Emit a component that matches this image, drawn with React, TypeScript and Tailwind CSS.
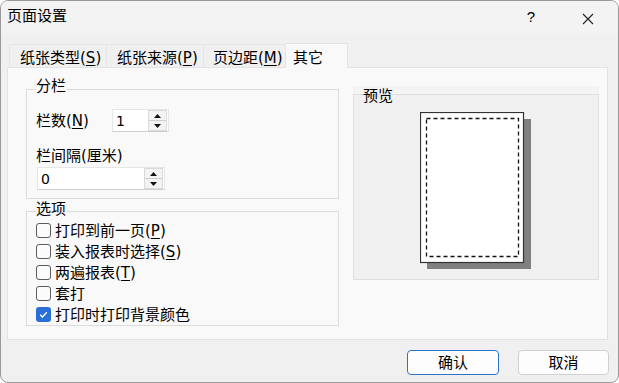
import React from "react";

function Mn({ c }: { c: string }) {
  return <span className="underline underline-offset-[2px]">{c}</span>;
}

function Spin() {
  return (
    <div className="flex flex-col w-[19px] h-[21px] border border-[#dadada] bg-[#f3f3f3]">
      <div className="flex-1 flex items-center justify-center border-b border-[#cfcfcf]">
        <svg width="7" height="4" viewBox="0 0 7 4">
          <path d="M0 4 L3.5 0 L7 4Z" fill="#111" />
        </svg>
      </div>
      <div className="flex-1 flex items-center justify-center">
        <svg width="7" height="4" viewBox="0 0 7 4">
          <path d="M0 0 L3.5 4 L7 0Z" fill="#111" />
        </svg>
      </div>
    </div>
  );
}

function Check({ checked, children }: { checked?: boolean; children: React.ReactNode }) {
  return (
    <div className="flex items-center h-[21px]">
      {checked ? (
        <div className="w-[15px] h-[15px] rounded-[3px] bg-[#2a6fd6] flex items-center justify-center">
          <svg width="11" height="11" viewBox="0 0 11 11">
            <path d="M2.2 5.8 L4.4 8 L8.8 3.3" fill="none" stroke="#fff" strokeWidth="1.3" />
          </svg>
        </div>
      ) : (
        <div className="w-[15px] h-[15px] rounded-[3px] border border-[#5c5c5c] bg-[#fbfbfb]" />
      )}
      <span className="ml-[4px] leading-[18px]">{children}</span>
    </div>
  );
}

export default function App() {
  return (
    <div className="w-[619px] h-[383px] bg-white">
      <div className="w-[619px] h-[383px] rounded-[8px] border border-[#9a9a9a] bg-[#f0f0f0] overflow-hidden text-[15px] text-black font-['DejaVu_Sans','Noto_Sans_CJK_SC',sans-serif] flex flex-col">
        {/* title bar */}
        <div className="h-[32px] bg-[#f3f3f3] flex items-start shrink-0">
          <div className="pl-[6px] pt-[6px] leading-[18px]">页面设置</div>
          <div className="flex-1" />
          <div className="pt-[7px] leading-[18px] text-[15px] mr-[47px] font-['Liberation_Sans',sans-serif]">?</div>
          <div className="pt-[12px] mr-[24px]">
            <svg width="12" height="12" viewBox="0 0 12 12">
              <path d="M1 1 L11 11 M11 1 L1 11" stroke="#222" strokeWidth="1.1" />
            </svg>
          </div>
        </div>

        {/* tabs */}
        <div className="ml-[8px] mt-[10px] flex items-end h-[24px] shrink-0">
          <div className="w-[97px] h-[23px] border-t border-l border-[#e6e6e6] bg-[#f0f0f0] pl-[10px] pt-[4px] leading-[18px]">
            纸张类型(<Mn c="S" />)
          </div>
          <div className="w-[97px] h-[23px] border-t border-l border-[#e6e6e6] bg-[#f0f0f0] pl-[10px] pt-[4px] leading-[18px]">
            纸张来源(<Mn c="P" />)
          </div>
          <div className="w-[82px] h-[23px] border-t border-l border-[#e6e6e6] bg-[#f0f0f0] pl-[9px] pt-[4px] leading-[18px]">
            页边距(<Mn c="M" />)
          </div>
          <div className="relative z-10 -mb-px w-[63px] h-[25px] border-t border-l border-r border-[#e3e3e3] bg-[#f9f9f9] pl-[7px] pt-[5px] leading-[18px]">
            其它
          </div>
        </div>

        {/* panel */}
        <div className="ml-[6px] w-[601px] h-[273px] border border-[#e3e3e3] bg-[#f9f9f9] flex shrink-0">
          {/* left column */}
          <div className="pl-[18px] w-[331px] flex flex-col">
            {/* 分栏 */}
            <div className="mt-[21px] h-[110px] border border-[#dcdcdc] flex flex-col">
              <div className="-mt-[12px] ml-[9px] w-fit h-[16px] leading-[16px] bg-[#f9f9f9] pr-[1px]">分栏</div>
              <div className="mt-[15px] pl-[9px] flex items-center h-[23px]">
                <div className="w-[76px] leading-[18px]">
                  栏数(<Mn c="N" />)
                </div>
                <div className="w-[57px] h-[23px] bg-white border border-[#e6e6e6] border-b-[#cfcfcf] flex items-center justify-between pl-[3px] pr-[1px]">
                  <span className="leading-[18px] text-[14px]">1</span>
                  <Spin />
                </div>
              </div>
              <div className="mt-[16px] pl-[9px] h-[16px] leading-[16px]">栏间隔(厘米)</div>
              <div className="mt-[3px] pl-[10px]">
                <div className="w-[128px] h-[23px] bg-white border border-[#e6e6e6] border-b-[#cfcfcf] flex items-center justify-between pl-[3px] pr-[1px]">
                  <span className="leading-[18px] text-[14px]">0</span>
                  <Spin />
                </div>
              </div>
            </div>

            {/* 选项 */}
            <div className="mt-[12px] h-[115px] border border-[#dcdcdc] flex flex-col">
              <div className="-mt-[11px] ml-[9px] w-fit h-[16px] leading-[16px] bg-[#f9f9f9] pr-[1px]">选项</div>
              <div className="mt-[3px] pl-[9px] flex flex-col">
                <Check>
                  打印到前一页(<Mn c="P" />)
                </Check>
                <Check>
                  装入报表时选择(<Mn c="S" />)
                </Check>
                <Check>
                  两遍报表(<Mn c="T" />)
                </Check>
                <Check>套打</Check>
                <Check checked>打印时打印背景颜色</Check>
              </div>
            </div>
          </div>

          {/* preview */}
          <div className="ml-[14px] w-[246px] mt-[18px] flex flex-col">
            <div className="h-[8px] bg-[#f4f4f4]" />
            <div className="h-[186px] border border-[#dedede] bg-[#f0f0f0] flex flex-col">
              <div className="-mt-[7px] ml-[9px] h-[16px] leading-[16px] w-fit">预览</div>
              <div className="mt-[8px] ml-[66px]">
                <svg width="114" height="160" viewBox="0 0 114 160">
                  <rect x="7" y="7" width="104" height="150" fill="#808080" />
                  <rect x="0.5" y="0.5" width="103" height="150" fill="#fff" stroke="#333" strokeWidth="1.2" />
                  <rect x="6.5" y="6.5" width="92" height="138" fill="none" stroke="#111" strokeWidth="1.3" strokeDasharray="4 3" />
                </svg>
              </div>
            </div>
          </div>
        </div>

        {/* buttons */}
        <div className="mt-[10px] flex justify-end pr-[9px] gap-[19px]">
          <div className="w-[92px] h-[25px] rounded-[4px] border border-[#2b73c9] bg-[#fdfdfd] flex items-center justify-center leading-[18px]">
            确认
          </div>
          <div className="w-[91px] h-[25px] rounded-[4px] border border-[#d0d0d0] bg-[#fdfdfd] flex items-center justify-center leading-[18px]">
            取消
          </div>
        </div>
      </div>
    </div>
  );
}
